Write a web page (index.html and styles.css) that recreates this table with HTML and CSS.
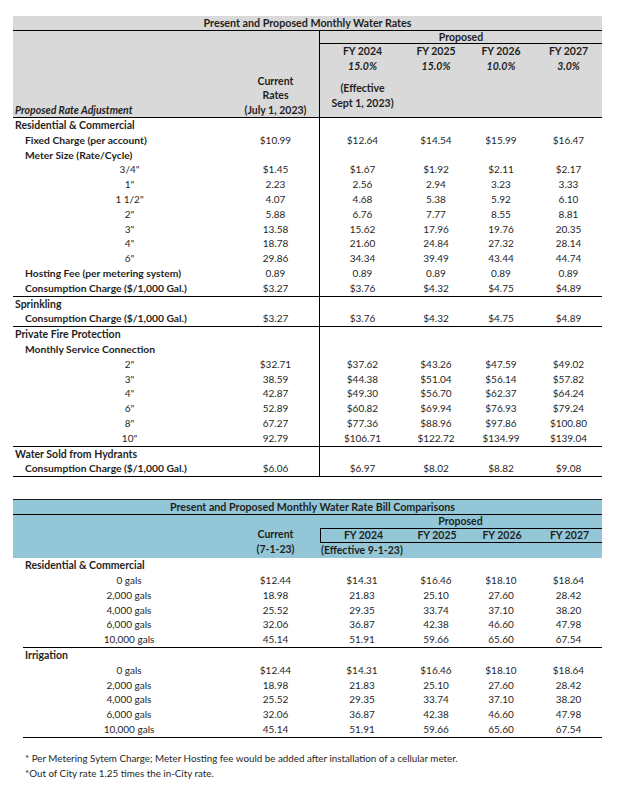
FILE: index.html
```html
<!DOCTYPE html>
<html lang="en">
<head>
<meta charset="utf-8">
<title>Present and Proposed Monthly Water Rates</title>
<link rel="stylesheet" href="styles.css">
</head>
<body>
<main class="page">
  <section class="rates">
    <div class="rates-head">
      <div class="head-title">Present and Proposed Monthly Water Rates</div>
      <div class="head-grid">
        <div class="h-label"><em>Proposed Rate Adjustment</em></div>
        <div class="h-current">Current<br>Rates<br>(July 1, 2023)</div>
        <div class="h-proposed">
          <div class="proposed-label">Proposed</div>
          <div class="fy-row"><span>FY 2024</span><span>FY 2025</span><span>FY 2026</span><span>FY 2027</span></div>
          <div class="fy-row pct"><span>15.0%</span><span>15.0%</span><span>10.0%</span><span>3.0%</span></div>
          <div class="eff-row"><span class="eff">(Effective<br>Sept 1, 2023)</span></div>
        </div>
      </div>
    </div>

    <div class="section">
      <div class="row"><span class="lbl sec">Residential &amp; Commercial</span><span></span><span class="p1"></span><span></span><span></span><span></span></div>
      <div class="row"><span class="lbl sub">Fixed Charge (per account)</span><span>$10.99</span><span class="p1">$12.64</span><span>$14.54</span><span>$15.99</span><span>$16.47</span></div>
      <div class="row"><span class="lbl sub">Meter Size (Rate/Cycle)</span><span></span><span class="p1"></span><span></span><span></span><span></span></div>
      <div class="row"><span class="lbl size">3/4"</span><span>$1.45</span><span class="p1">$1.67</span><span>$1.92</span><span>$2.11</span><span>$2.17</span></div>
      <div class="row"><span class="lbl size">1"</span><span>2.23</span><span class="p1">2.56</span><span>2.94</span><span>3.23</span><span>3.33</span></div>
      <div class="row"><span class="lbl size">1 1/2"</span><span>4.07</span><span class="p1">4.68</span><span>5.38</span><span>5.92</span><span>6.10</span></div>
      <div class="row"><span class="lbl size">2"</span><span>5.88</span><span class="p1">6.76</span><span>7.77</span><span>8.55</span><span>8.81</span></div>
      <div class="row"><span class="lbl size">3"</span><span>13.58</span><span class="p1">15.62</span><span>17.96</span><span>19.76</span><span>20.35</span></div>
      <div class="row"><span class="lbl size">4"</span><span>18.78</span><span class="p1">21.60</span><span>24.84</span><span>27.32</span><span>28.14</span></div>
      <div class="row"><span class="lbl size">6"</span><span>29.86</span><span class="p1">34.34</span><span>39.49</span><span>43.44</span><span>44.74</span></div>
      <div class="row"><span class="lbl sub">Hosting Fee (per metering system)</span><span>0.89</span><span class="p1">0.89</span><span>0.89</span><span>0.89</span><span>0.89</span></div>
      <div class="row"><span class="lbl sub">Consumption Charge ($/1,000 Gal.)</span><span>$3.27</span><span class="p1">$3.76</span><span>$4.32</span><span>$4.75</span><span>$4.89</span></div>
    </div>

    <div class="section">
      <div class="row"><span class="lbl sec">Sprinkling</span><span></span><span class="p1"></span><span></span><span></span><span></span></div>
      <div class="row"><span class="lbl sub">Consumption Charge ($/1,000 Gal.)</span><span>$3.27</span><span class="p1">$3.76</span><span>$4.32</span><span>$4.75</span><span>$4.89</span></div>
    </div>

    <div class="section">
      <div class="row"><span class="lbl sec">Private Fire Protection</span><span></span><span class="p1"></span><span></span><span></span><span></span></div>
      <div class="row"><span class="lbl sub">Monthly Service Connection</span><span></span><span class="p1"></span><span></span><span></span><span></span></div>
      <div class="row"><span class="lbl size">2"</span><span>$32.71</span><span class="p1">$37.62</span><span>$43.26</span><span>$47.59</span><span>$49.02</span></div>
      <div class="row"><span class="lbl size">3"</span><span>38.59</span><span class="p1">$44.38</span><span>$51.04</span><span>$56.14</span><span>$57.82</span></div>
      <div class="row"><span class="lbl size">4"</span><span>42.87</span><span class="p1">$49.30</span><span>$56.70</span><span>$62.37</span><span>$64.24</span></div>
      <div class="row"><span class="lbl size">6"</span><span>52.89</span><span class="p1">$60.82</span><span>$69.94</span><span>$76.93</span><span>$79.24</span></div>
      <div class="row"><span class="lbl size">8"</span><span>67.27</span><span class="p1">$77.36</span><span>$88.96</span><span>$97.86</span><span>$100.80</span></div>
      <div class="row"><span class="lbl size">10"</span><span>92.79</span><span class="p1">$106.71</span><span>$122.72</span><span>$134.99</span><span>$139.04</span></div>
    </div>

    <div class="section">
      <div class="row"><span class="lbl sec">Water Sold from Hydrants</span><span></span><span class="p1"></span><span></span><span></span><span></span></div>
      <div class="row"><span class="lbl sub">Consumption Charge ($/1,000 Gal.)</span><span>$6.06</span><span class="p1">$6.97</span><span>$8.02</span><span>$8.82</span><span>$9.08</span></div>
    </div>
  </section>

  <section class="bills">
    <div class="bills-head">
      <div class="head-title bills-title">Present and Proposed Monthly Water Rate Bill Comparisons</div>
      <div class="bills-grid">
        <div></div>
        <div class="b-current">Current<br>(7-1-23)</div>
        <div class="b-proposed">
          <div class="b-proposed-label">Proposed</div>
          <div class="b-fy-box"><span>FY 2024</span><span>FY 2025</span><span>FY 2026</span><span>FY 2027</span></div>
          <div class="b-eff">(Effective 9-1-23)</div>
        </div>
      </div>
    </div>

    <div class="bsection">
      <div class="brow"><span class="blbl bsec">Residential &amp; Commercial</span><span></span><span></span><span></span><span></span><span></span></div>
      <div class="brow"><span class="blbl gal">0 gals</span><span>$12.44</span><span>$14.31</span><span>$16.46</span><span>$18.10</span><span>$18.64</span></div>
      <div class="brow"><span class="blbl gal">2,000 gals</span><span>18.98</span><span>21.83</span><span>25.10</span><span>27.60</span><span>28.42</span></div>
      <div class="brow"><span class="blbl gal">4,000 gals</span><span>25.52</span><span>29.35</span><span>33.74</span><span>37.10</span><span>38.20</span></div>
      <div class="brow"><span class="blbl gal">6,000 gals</span><span>32.06</span><span>36.87</span><span>42.38</span><span>46.60</span><span>47.98</span></div>
      <div class="brow"><span class="blbl gal">10,000 gals</span><span>45.14</span><span>51.91</span><span>59.66</span><span>65.60</span><span>67.54</span></div>
    </div>

    <div class="bsection">
      <div class="brow"><span class="blbl bsec">Irrigation</span><span></span><span></span><span></span><span></span><span></span></div>
      <div class="brow"><span class="blbl gal">0 gals</span><span>$12.44</span><span>$14.31</span><span>$16.46</span><span>$18.10</span><span>$18.64</span></div>
      <div class="brow"><span class="blbl gal">2,000 gals</span><span>18.98</span><span>21.83</span><span>25.10</span><span>27.60</span><span>28.42</span></div>
      <div class="brow"><span class="blbl gal">4,000 gals</span><span>25.52</span><span>29.35</span><span>33.74</span><span>37.10</span><span>38.20</span></div>
      <div class="brow"><span class="blbl gal">6,000 gals</span><span>32.06</span><span>36.87</span><span>42.38</span><span>46.60</span><span>47.98</span></div>
      <div class="brow"><span class="blbl gal">10,000 gals</span><span>45.14</span><span>51.91</span><span>59.66</span><span>65.60</span><span>67.54</span></div>
    </div>
  </section>

  <div class="notes">
    <p>* Per Metering Sytem Charge; Meter Hosting fee would be added after installation of a cellular meter.</p>
    <p>*Out of City rate 1.25 times the in-City rate.</p>
  </div>
</main>
</body>
</html>
```

FILE: styles.css
```css
* { box-sizing: border-box; }

html, body {
  margin: 0;
  padding: 0;
  background: #ffffff;
}

body {
  font-family: Lato, "Open Sans", "Liberation Sans", sans-serif;
  font-size: 10px;
  color: #1f1f1f;
}

.page {
  padding: 16px 0 0 13px;
  width: 602px;
}

/* ---------- table 1 ---------- */
.rates { width: 589px; }

.rates-head { background: #d9d9d9; }

.head-title {
  height: 15px;
  line-height: 14px;
  text-align: center;
  font-weight: 700;
  font-size: 10.7px;
  border-bottom: 1px solid #000;
}

.head-grid {
  display: grid;
  grid-template-columns: 219px 87px 283px;
  height: 87px;
  border-bottom: 1px solid #000;
  font-weight: 700;
  font-size: 10.5px;
}

.h-label {
  align-self: end;
  padding-left: 2px;
  line-height: 14.5px;
}
.h-label em { font-style: italic; }

.h-current {
  align-self: end;
  text-align: center;
  line-height: 14.5px;
}

.h-proposed {
  border-left: 1px solid #000;
  display: flex;
  flex-direction: column;
}

.proposed-label {
  height: 13px;
  line-height: 12px;
  text-align: center;
  border-bottom: 1px solid #000;
}

.fy-row {
  display: grid;
  grid-template-columns: 85px 62px 68px 67px;
  height: 15px;
  line-height: 15px;
  text-align: center;
}
.fy-row.pct { font-style: italic; }

.eff-row {
  flex: 1;
  display: grid;
  grid-template-columns: 85px 1fr;
  align-items: center;
}
.eff {
  text-align: center;
  line-height: 15px;
}

.section { border-bottom: 1px solid #000; }

.row {
  display: grid;
  grid-template-columns: 219px 87px 86px 62px 68px 67px;
  height: 14.8px;
  line-height: 14.8px;
  text-align: center;
  white-space: nowrap;
}
.row .p1 { border-left: 1px solid #000; }

.lbl { text-align: left; }
.sec { font-weight: 700; font-size: 10.5px; padding-left: 2px; }
.sub { font-weight: 700; font-size: 10.3px; padding-left: 12px; }
.size { text-align: center; padding-left: 14px; }

/* ---------- table 2 ---------- */
.bills {
  width: 589px;
  margin-top: 22px;
}

.bills-head {
  background: #93c7d7;
  border-top: 1px solid #1a1a1a;
  font-weight: 700;
  font-size: 10.5px;
}

.bills-title {
  padding-left: 10px;
}

.bills-grid {
  display: grid;
  grid-template-columns: 219px 87px 283px;
  height: 43px;
}

.b-current {
  align-self: end;
  text-align: center;
  line-height: 15px;
  padding-bottom: 1px;
}

.b-proposed {
  display: flex;
  flex-direction: column;
}

.b-proposed-label {
  height: 13px;
  line-height: 13px;
  text-align: center;
}

.b-fy-box {
  display: grid;
  grid-template-columns: 85px 62px 68px 67px;
  margin-left: 1px;
  height: 15px;
  line-height: 13px;
  text-align: center;
  border-top: 1px solid #000;
  border-left: 1px solid #000;
  border-bottom: 1px solid #000;
}

.b-eff {
  flex: 1;
  line-height: 15px;
  padding-left: 2px;
}

.bsection {
  margin-left: 10px;
  border-bottom: 1px solid #000;
}

.brow {
  display: grid;
  grid-template-columns: 209px 87px 86px 62px 68px 67px;
  height: 14.8px;
  line-height: 14.8px;
  text-align: center;
  white-space: nowrap;
}

.blbl { text-align: left; }
.bsec { font-weight: 700; font-size: 10.5px; padding-left: 2px; }
.gal { text-align: center; padding-left: 3px; }

/* ---------- notes ---------- */
.notes {
  margin-top: 13px;
  padding-left: 12px;
  font-size: 9.8px;
}
.notes p {
  margin: 0;
  line-height: 15px;
}
```
